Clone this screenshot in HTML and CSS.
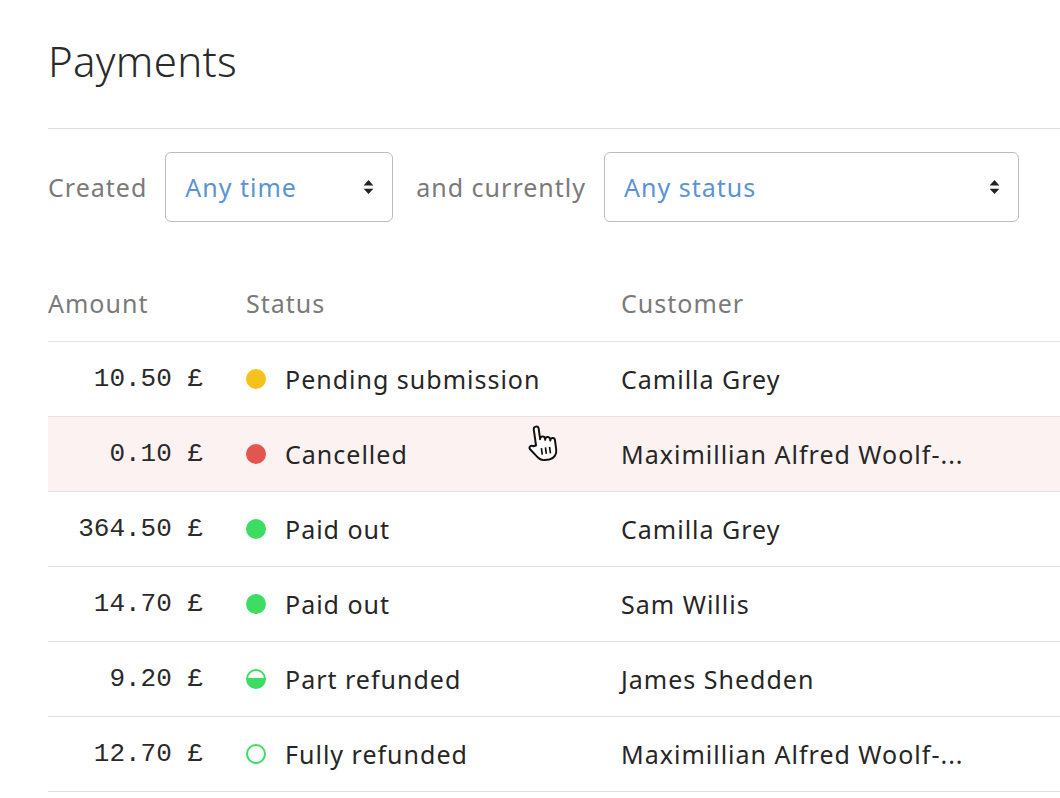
FILE: index.html
```html
<!DOCTYPE html>
<html lang="en">
<head>
<meta charset="utf-8">
<title>Payments</title>
<link rel="stylesheet" href="styles.css">
</head>
<body>
<div class="page">
  <header class="page-head">
    <h1 class="title">Payments</h1>
  </header>

  <div class="filters">
    <span class="filter-label">Created</span>
    <div class="select select-time">
      <span class="select-value">Any time</span>
      <svg class="select-arrows" width="13" height="18" viewBox="0 0 12 16"><path d="M1.5 6.5 L6 1.5 L10.5 6.5 Z M1.5 9.5 L6 14.5 L10.5 9.5 Z" fill="#222"/></svg>
    </div>
    <span class="filter-label">and currently</span>
    <div class="select select-status">
      <span class="select-value">Any status</span>
      <svg class="select-arrows" width="13" height="18" viewBox="0 0 12 16"><path d="M1.5 6.5 L6 1.5 L10.5 6.5 Z M1.5 9.5 L6 14.5 L10.5 9.5 Z" fill="#222"/></svg>
    </div>
  </div>

  <div class="table">
    <div class="row head">
      <div class="cell c-amount">Amount</div>
      <div class="cell c-status">Status</div>
      <div class="cell c-customer">Customer</div>
    </div>

    <div class="row">
      <div class="cell c-amount amount">10.50 £</div>
      <div class="cell c-status"><span class="dot dot-pending"></span>Pending submission</div>
      <div class="cell c-customer">Camilla Grey</div>
    </div>
    <div class="row row-hover">
      <div class="cell c-amount amount">0.10 £</div>
      <div class="cell c-status"><span class="dot dot-cancelled"></span>Cancelled</div>
      <div class="cell c-customer">Maximillian Alfred Woolf-...</div>
      <svg class="cursor" width="33" height="40" viewBox="0 0 20 24">
        <path d="M6.5 13 V3.2 a1.5 1.5 0 0 1 3 0 V9.6 a1.5 1.5 0 0 1 3 0 V10.4 a1.5 1.5 0 0 1 3 0 V11.3 a1.4 1.4 0 0 1 2.8 0 V17 c0 3 -2 5.5 -5 5.5 H10.5 c-2 0 -3.2 -1 -4.2 -2.5 L2.6 14.8 c-0.8 -1.3 0.9 -2.7 2.1 -1.6 Z" fill="#fff" stroke="#111" stroke-width="1.2" stroke-linejoin="round"/>
        <path d="M9.5 15 V19 M12 15 V19 M14.5 15 V19" stroke="#111" stroke-width="1"/>
      </svg>
    </div>
    <div class="row">
      <div class="cell c-amount amount">364.50 £</div>
      <div class="cell c-status"><span class="dot dot-paid"></span>Paid out</div>
      <div class="cell c-customer">Camilla Grey</div>
    </div>
    <div class="row">
      <div class="cell c-amount amount">14.70 £</div>
      <div class="cell c-status"><span class="dot dot-paid"></span>Paid out</div>
      <div class="cell c-customer">Sam Willis</div>
    </div>
    <div class="row">
      <div class="cell c-amount amount">9.20 £</div>
      <div class="cell c-status"><span class="dot dot-part"></span>Part refunded</div>
      <div class="cell c-customer">James Shedden</div>
    </div>
    <div class="row">
      <div class="cell c-amount amount">12.70 £</div>
      <div class="cell c-status"><span class="dot dot-full"></span>Fully refunded</div>
      <div class="cell c-customer">Maximillian Alfred Woolf-...</div>
    </div>
  </div>
</div>
</body>
</html>
```

FILE: styles.css
```css
html, body {
  margin: 0;
  padding: 0;
  background: #ffffff;
}

body {
  font-family: "Noto Sans", "Open Sans", sans-serif;
  color: #262626;
  overflow: hidden;
}

.page {
  padding-left: 48px;
  width: 1100px;
}

.page-head {
  height: 128px;
  border-bottom: 1px solid #dedede;
}

.title {
  margin: 0;
  padding-top: 33px;
  font-size: 42px;
  font-weight: 300;
  line-height: 56px;
  color: #2a2a2a;
  letter-spacing: 0.3px;
}

.filters {
  display: flex;
  align-items: center;
  margin-top: 23px;
  height: 70px;
}

.filter-label {
  font-size: 25px;
  letter-spacing: 1px;
  color: #7a7a7a;
}

.select {
  box-sizing: border-box;
  height: 70px;
  border: 1.5px solid #bdbdbd;
  border-radius: 6px;
  display: flex;
  align-items: center;
  justify-content: space-between;
  padding: 0 17px 0 19px;
}

.select-time {
  width: 228px;
  margin: 0 23px 0 18px;
}

.select-status {
  width: 415px;
  margin-left: 18px;
}

.select-value {
  font-size: 25px;
  letter-spacing: 1px;
  color: #5b93d3;
}

.select-arrows {
  display: block;
}

.table {
  margin-top: 45px;
}

.row {
  position: relative;
  display: grid;
  grid-template-columns: 198px 375px 1fr;
  align-items: center;
  height: 74px;
  border-bottom: 1px solid #e2e2e2;
  font-size: 25px;
  letter-spacing: 1px;
  color: #262626;
}

.row.head {
  color: #7a7a7a;
  height: 72px;
  padding-bottom: 2px;
}

.row-hover {
  background: #fdf2f2;
}

.cell {
  white-space: nowrap;
}

.c-status {
  display: flex;
  align-items: center;
}

.amount {
  font-family: "Liberation Mono", "DejaVu Sans Mono", monospace;
  font-size: 26px;
  letter-spacing: 0;
  text-align: right;
  padding-right: 43px;
  color: #2a2a2a;
}

.dot {
  box-sizing: border-box;
  width: 20px;
  height: 20px;
  border-radius: 50%;
  margin-right: 19px;
  flex: none;
}

.dot-pending { background: #f6c11d; }
.dot-cancelled { background: #e3554f; }
.dot-paid { background: #3ddc63; }
.dot-part {
  border: 2px solid #3ddc63;
  background: linear-gradient(to bottom, #ffffff 0 45%, #3ddc63 45% 100%);
}
.dot-full {
  border: 2px solid #3ddc63;
  background: #ffffff;
}

.cursor {
  position: absolute;
  left: 477px;
  top: 6px;
  transform: rotate(-8deg);
}
```
